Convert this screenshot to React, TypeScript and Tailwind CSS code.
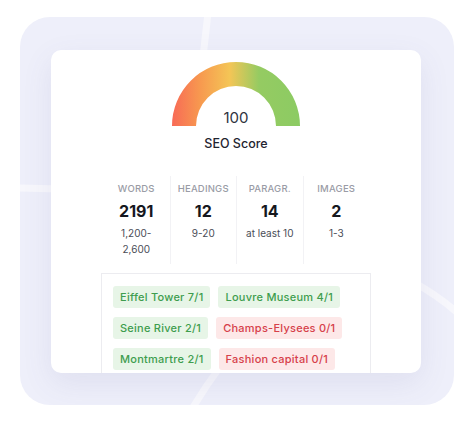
import React from "react";

const stats = [
  { label: "Words", value: "2191", hint: ["1,200-", "2,600"] },
  { label: "Headings", value: "12", hint: ["9-20"] },
  { label: "Paragr.", value: "14", hint: ["at least 10"] },
  { label: "Images", value: "2", hint: ["1-3"] },
];

const keywords: { text: string; ok: boolean }[][] = [
  [
    { text: "Eiffel Tower 7/1", ok: true },
    { text: "Louvre Museum 4/1", ok: true },
  ],
  [
    { text: "Seine River 2/1", ok: true },
    { text: "Champs-Elysees 0/1", ok: false },
  ],
  [
    { text: "Montmartre 2/1", ok: true },
    { text: "Fashion capital 0/1", ok: false },
  ],
];

// half ring, red -> yellow -> green
function Gauge() {
  return (
    <svg width="128" height="64" viewBox="0 0 128 64">
      <defs>
        <linearGradient id="g" x1="0" y1="0" x2="1" y2="0">
          <stop offset="0" stopColor="#f86a56" />
          <stop offset="0.22" stopColor="#f7994f" />
          <stop offset="0.45" stopColor="#f4c556" />
          <stop offset="0.68" stopColor="#95cb62" />
          <stop offset="1" stopColor="#8ccb63" />
        </linearGradient>
      </defs>
      <path d="M0 64 A64 64 0 0 1 128 64 L104 64 A40 40 0 0 0 24 64 Z" fill="url(#g)" />
    </svg>
  );
}

export default function App() {
  return (
    <div className="h-[428px] w-[474px] bg-white pl-[20px] pt-[17px] font-['Inter',sans-serif]">
      <div className="relative h-[388px] w-[434px] overflow-hidden rounded-[30px] bg-[#eeeffa]">
        {/* map roads behind the card */}
        <svg className="absolute inset-0" width="434" height="388" viewBox="0 0 434 388">
          <g fill="none" stroke="#f7f7fc" strokeWidth="7" strokeLinecap="round">
            <path d="M188 -4 L183 40" />
            <path d="M-4 171 L40 172" />
            <path d="M395 266 Q420 280 440 298" />
            <path d="M200 350 Q185 370 172 392" />
          </g>
        </svg>

        <div className="relative ml-[31px] mt-[33px] h-[323px] w-[370px] overflow-hidden rounded-[10px] bg-white shadow-[0_10px_30px_rgba(90,90,150,0.10)]">
          <div className="flex flex-col items-center pt-[12px]">
            <div className="relative h-[64px] w-[128px]">
              <Gauge />
              <div className="absolute inset-x-0 bottom-[-2px] text-center text-[15px] leading-[20px] text-[#2f3340]">
                100
              </div>
            </div>
            <div className="mt-[9px] text-[12.5px] font-medium leading-[18px] text-[#1f2430]">SEO Score</div>
          </div>

          <div className="mx-auto mt-[23px] grid w-[266px] grid-cols-4">
            {stats.map((s, i) => (
              <div
                key={s.label}
                className={`flex h-[88px] flex-col items-center pt-[7px] ${i > 0 ? "border-l border-[#f2f2f5]" : ""}`}
              >
                <div className="text-[9.5px] font-medium uppercase leading-[12px] tracking-[0.2px] text-[#9a9ca6]">
                  {s.label}
                </div>
                <div className="mt-[6px] text-[16px] font-bold leading-[20px] text-[#15171e]">{s.value}</div>
                <div className="mt-[4px] text-center text-[10px] leading-[16px] text-[#4a4d57]">
                  {s.hint.map((h) => (
                    <div key={h}>{h}</div>
                  ))}
                </div>
              </div>
            ))}
          </div>

          <div className="mx-auto mt-[9px] flex w-[270px] flex-col gap-[9px] border border-[#ececf0] px-[11px] pb-[12px] pt-[12px]">
            {keywords.map((row, r) => (
              <div key={r} className="flex gap-[8px]">
                {row.map((k) => (
                  <span
                    key={k.text}
                    className={`rounded-[3px] px-[7px] text-[11px] font-medium leading-[22px] tracking-[0.25px] ${
                      k.ok ? "bg-[#e7f5e7] text-[#3e9d4e]" : "bg-[#fde8e8] text-[#d6404a]"
                    }`}
                  >
                    {k.text}
                  </span>
                ))}
              </div>
            ))}
          </div>
        </div>
      </div>
    </div>
  );
}
